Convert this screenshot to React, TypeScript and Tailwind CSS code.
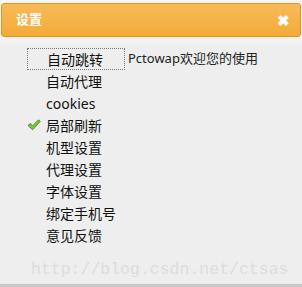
import React from "react";

const items = ["自动跳转", "自动代理", "cookies", "局部刷新", "机型设置", "代理设置", "字体设置", "绑定手机号", "意见反馈"];

function Check() {
  return (
    <svg width="14" height="12" viewBox="0 0 14 12" className="absolute left-[0px] top-[5px]">
      <path d="M1 6.5 L3.5 4.5 L5.5 7 L11.5 0.8 L13.2 2.5 L5.6 10.8 Z" fill="#80c445" stroke="#4f8f1e" strokeWidth="1" strokeLinejoin="round" />
    </svg>
  );
}

export default function App() {
  return (
    <div className="w-[302px] h-[287px] bg-[#eeeeee] relative overflow-hidden" style={{ fontFamily: '"Noto Sans", "Noto Sans CJK SC", sans-serif' }}>
      <div className="pt-[3px] px-[1px] bg-[#f7f7f7]">
        <div className="h-[34px] rounded-[3px] border border-[#e5951c] bg-gradient-to-b from-[#f7bb58] to-[#f3ab36] flex items-center justify-between pl-[14px] pr-[10px]">
          <span className="text-white font-bold text-[13px]">设置</span>
          <span className="text-white font-black text-[15px] leading-none">✖</span>
        </div>
      </div>
      <div className="h-[11px] bg-gradient-to-b from-[#f6f6f6] to-[#eeeeee]" />
      <div className="pl-[27px]">
        {items.map((t, i) => (
          <div key={t} className="h-[22px] flex items-center">
            <div className={"relative h-[22px] w-[98px] pl-[19px] flex items-center text-[14px] text-[#111] " + (i === 0 ? "border border-dotted border-[#777] pl-[18px]" : "")}>
              {i === 3 && <Check />}
              {t}
            </div>
            {i === 0 && <span className="ml-[3px] text-[13px] text-[#222]">Pctowap欢迎您的使用</span>}
          </div>
        ))}
      </div>
      <div className="pl-[31px] mt-[16px] text-[16.5px] text-[#dcdcdc] leading-none" style={{ fontFamily: '"Liberation Mono", monospace' }}>
        http://blog.csdn.net/ctsas
      </div>
      <div className="absolute left-0 right-0 top-[284px] h-[3px] bg-[#c9c9c9]" />
    </div>
  );
}
